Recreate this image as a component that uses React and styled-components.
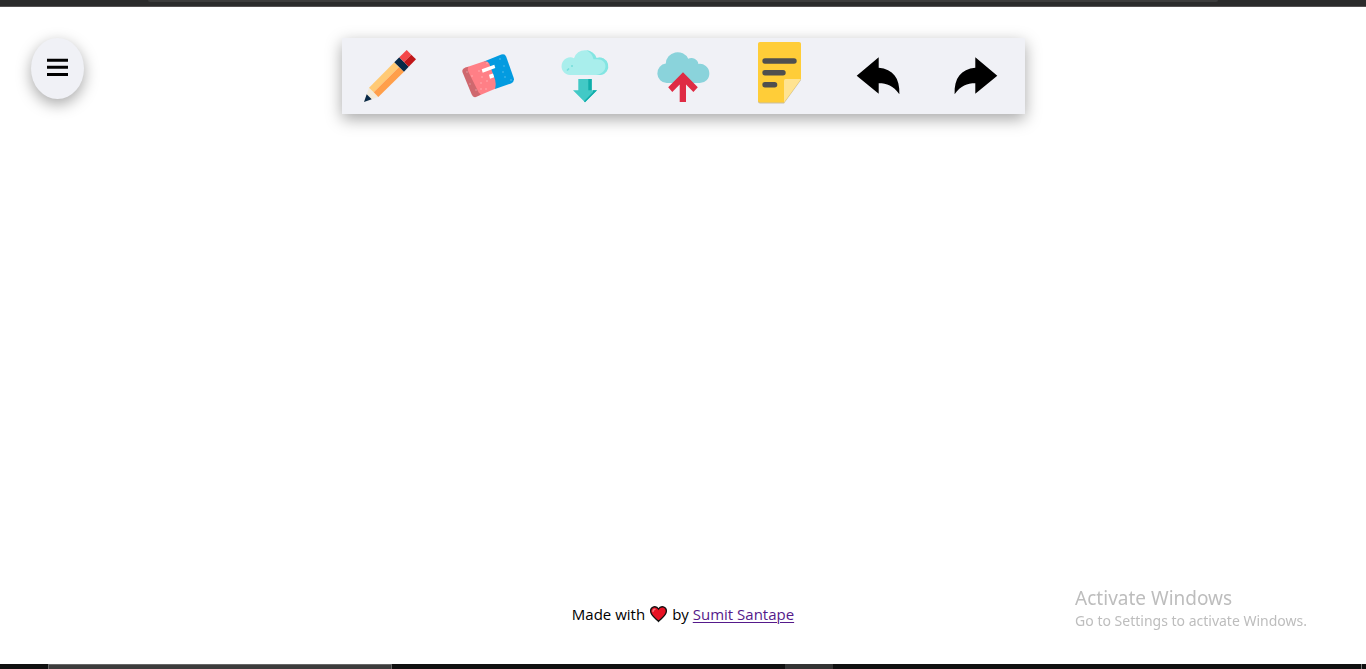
import React from "react";
import styled, { createGlobalStyle } from "styled-components";

const GlobalStyle = createGlobalStyle`
  * { box-sizing: border-box; }
  body {
    margin: 0;
    background: #fff;
    color: #000;
    font-family: "Segoe UI", "Open Sans", sans-serif;
  }
`;

const Page = styled.div`
  min-height: 100vh;
  display: flex;
  flex-direction: column;
`;

const BrowserEdge = styled.div`
  height: 7px;
  padding: 0 148px;
  background: #2b2b2b;
  border-bottom: 1px solid #555253;
`;

const AddressBar = styled.div`
  height: 2px;
  background: #3c3c3c;
  border-radius: 0 0 8px 8px;
`;

const Header = styled.header`
  display: grid;
  grid-template-columns: 1fr 2fr 1fr;
  align-items: start;
  padding-top: 31px;
`;

const MenuButton = styled.button`
  width: 53px;
  height: 61px;
  margin-left: 31px;
  padding: 0 0 3px;
  display: flex;
  align-items: center;
  justify-content: center;
  border: 0;
  border-radius: 50%;
  background: #f0f1f6;
  box-shadow: rgba(0, 0, 0, 0.35) 0 5px 15px;
  cursor: pointer;
`;

const Toolbar = styled.nav`
  display: grid;
  grid-template-columns: repeat(7, 1fr);
  height: 76px;
  background: #f0f1f6;
  box-shadow: rgba(0, 0, 0, 0.35) 0 5px 15px;
`;

const ToolButton = styled.button`
  display: flex;
  align-items: center;
  justify-content: center;
  padding: 0;
  border: 0;
  background: transparent;
  cursor: pointer;
`;

const ToolIcon = styled.svg`
  width: 64px;
  height: 64px;
  overflow: visible;
`;

const Board = styled.main`
  flex: 1;
`;

const Credit = styled.footer`
  display: flex;
  align-items: center;
  justify-content: center;
  gap: 4px;
  padding-bottom: 39px;
  font-size: 15px;
  line-height: 22px;
`;

const AuthorLink = styled.a`
  color: #551a8b;
  text-underline-offset: 2px;
  text-decoration-thickness: 1px;
`;

const Watermark = styled.aside`
  position: fixed;
  right: 59px;
  bottom: 37px;
  color: #bdbdbd;
  font-family: "Segoe UI", "Noto Sans", sans-serif;
`;

const WatermarkTitle = styled.div`
  font-size: 19px;
  line-height: 24px;
`;

const WatermarkText = styled.div`
  font-size: 14px;
  line-height: 22px;
`;

const Taskbar = styled.div`
  display: flex;
  height: 5px;
  padding: 0 4px 0 48px;
  background: #101010;
`;

const TaskSearch = styled.div`
  width: 344px;
  background: #3c3c3c;
  border: 1px solid #666;
  border-bottom: 0;
`;

const TaskApp = styled.div`
  width: 48px;
  margin-left: 393px;
  background: #333;
`;

const DesktopEdge = styled.div`
  width: 1px;
  margin-left: auto;
  background: #777;
`;

const PencilIcon = () => (
  <>
    <path d="M6 58 11 43.7 20.3 53Z" fill="#f2ebda" />
    <path d="M6 58 8.7 50.3 13.7 55.3Z" fill="#082947" />
    <path d="M11 43.7 36.3 18.3 41 23 15.7 48.3Z" fill="#ffca75" />
    <path d="M15.7 48.3 41 23 46 27.7 20.3 53Z" fill="#ff9f4a" />
    <path d="M36.3 18.3 41.3 13.3 50.7 22.7 46 27.7Z" fill="#082947" />
    <path d="M41.3 13.3 48.7 6 53.3 10.7 46 18Z" fill="#f44649" />
    <path d="M46 18 53.3 10.7 58 15.3 50.7 22.7Z" fill="#c01719" />
  </>
);

const specks = [
  [11, 28], [16, 32], [14, 40], [20, 46], [23, 27], [26, 33], [25, 39], [25, 45],
  [31, 19], [31, 37], [30, 45], [44, 15], [48, 22], [47, 28], [49, 33], [55, 36],
];

const EraserIcon = () => (
  <>
    <path d="M28 17.4 45.3 10.6Q48.8 9.3 50.2 12.7L57.8 34.3Q58.6 38 55 39.5L39 45Z" fill="#039be0" />
    <path d="M9 23.8 28.3 17.3Q32 16.8 33.2 19.5L39.2 36Q40.2 39.5 39.2 44.8L20.8 52.4Z" fill="#ff7f86" />
    <path d="M9 23.8 12.5 22.7Q11.2 24.5 12 27L22.7 48.5 24.8 50.5 20 53Q17 53.8 15.7 50.5L6.4 28Q5.8 25 9 23.8Z" fill="#cf686e" />
    <path d="M25.7 25.3 38.3 20.7 39.3 24 26.7 28.7ZM33 30.7 37 29.5 38.2 33.3 34 34.7Z" fill="#fff" />
    {specks.map(([x, y]) => (
      <circle key={`${x}-${y}`} cx={x} cy={y} r="0.7" fill="#fff" opacity="0.45" />
    ))}
  </>
);

const DownloadIcon = () => (
  <>
    <path d="M17 31A8.8 8.8 0 1 1 21 14.2A12 12 0 0 1 43.5 14A8.8 8.8 0 1 1 47.7 31Z" fill="#a9eeec" />
    <path d="M33 6.1Q41 7.5 43.5 14A8.8 8.8 0 1 1 47.7 31H43C56 29 55 15 44 15.2H40.5Q39 9 33 6.1Z" fill="#84e5e2" />
    <circle cx="19" cy="22" r="1" fill="#74dedb" />
    <path d="M14 26.5 16 24.5" stroke="#74dedb" strokeWidth="1.6" />
    <path d="M25.3 35H38.7V46.3H44L32 58.3 20 46.3H25.3Z" fill="#42c9c6" />
    <path d="M35.3 35H38.7V46.3H44L32 58.3 31 57.3 40 48V46.3H35.3Z" fill="#10adaa" />
  </>
);

const UploadIcon = () => (
  <>
    <path
      d="M15.7 39A9.8 9.8 0 0 1 14.8 19.5A11.8 11.8 0 0 1 37.2 14.8A7 7 0 0 1 47.4 19.9A9.6 9.6 0 1 1 48.4 39Z"
      fill="#8ad3db"
    />
    <path d="M32 28.3 46.8 43.3 42.4 48 35 40.5V58H28.7V40.5L21.3 48 17.2 43.3Z" fill="#df2b44" />
  </>
);

const NoteIcon = () => (
  <>
    <path d="M11 -1H50Q52 -1 52 1V36L35 59.5H11Q9 59.5 9 57.5V1Q9 -1 11 -1Z" fill="#c9bea0" />
    <path d="M11 -2H50Q52 -2 52 0V35L35 58.5H11Q9 58.5 9 56.5V0Q9 -2 11 -2Z" fill="#ffcd38" />
    <path d="M35 58.5V36.5Q35 35 36.5 35H52Z" fill="#ffe391" />
    <path d="M16 17H45M16 28.7H34M16 40.7H25.6" stroke="#4f4f4f" strokeWidth="5.4" strokeLinecap="round" />
  </>
);

const arrowPath = "M10.7 31.7 32.7 13.3V23.7C47 25 54 34 53.4 50.3C47 41.5 41 39.3 32.7 39.3V49.7Z";

const UndoIcon = () => <path d={arrowPath} />;
const RedoIcon = () => <path d={arrowPath} transform="matrix(-1 0 0 1 64 0)" />;

const tools = [
  ["Pencil", PencilIcon],
  ["Eraser", EraserIcon],
  ["Download", DownloadIcon],
  ["Upload", UploadIcon],
  ["Sticky note", NoteIcon],
  ["Undo", UndoIcon],
  ["Redo", RedoIcon],
];

export default function App() {
  return (
    <Page>
      <GlobalStyle />
      <BrowserEdge>
        <AddressBar />
      </BrowserEdge>
      <Header>
        <MenuButton aria-label="Menu">
          <svg width="21" height="18" viewBox="0 0 21 18" aria-hidden="true">
            <path d="M0 2.3H21M0 9.3H21M0 16.4H21" stroke="#000" strokeWidth="3" />
          </svg>
        </MenuButton>
        <Toolbar aria-label="Tools">
          {tools.map(([name, Icon]) => (
            <ToolButton key={name} aria-label={name}>
              <ToolIcon viewBox="0 0 64 64" aria-hidden="true">
                <Icon />
              </ToolIcon>
            </ToolButton>
          ))}
        </Toolbar>
      </Header>
      <Board />
      <Credit>
        <span>Made with</span>
        <svg width="19" height="18" viewBox="0 0 19 18" role="img" aria-label="love">
          <path
            d="M9.5 16.4C7.5 14 1.6 10.6 1.6 6C1.6 1.6 7.2 0.2 9.5 4C11.8 0.2 17.4 1.6 17.4 6C17.4 10.6 11.5 14 9.5 16.4Z"
            fill="#e81224"
            stroke="#111"
            strokeWidth="1.3"
          />
          <path d="M4 6.5Q4 4.3 6 4.2" fill="none" stroke="#f4747b" strokeWidth="1.4" strokeLinecap="round" />
        </svg>
        <span>
          by <AuthorLink href="#author">Sumit Santape</AuthorLink>
        </span>
      </Credit>
      <Taskbar>
        <TaskSearch />
        <TaskApp />
        <DesktopEdge />
      </Taskbar>
      <Watermark>
        <WatermarkTitle>Activate Windows</WatermarkTitle>
        <WatermarkText>Go to Settings to activate Windows.</WatermarkText>
      </Watermark>
    </Page>
  );
}
